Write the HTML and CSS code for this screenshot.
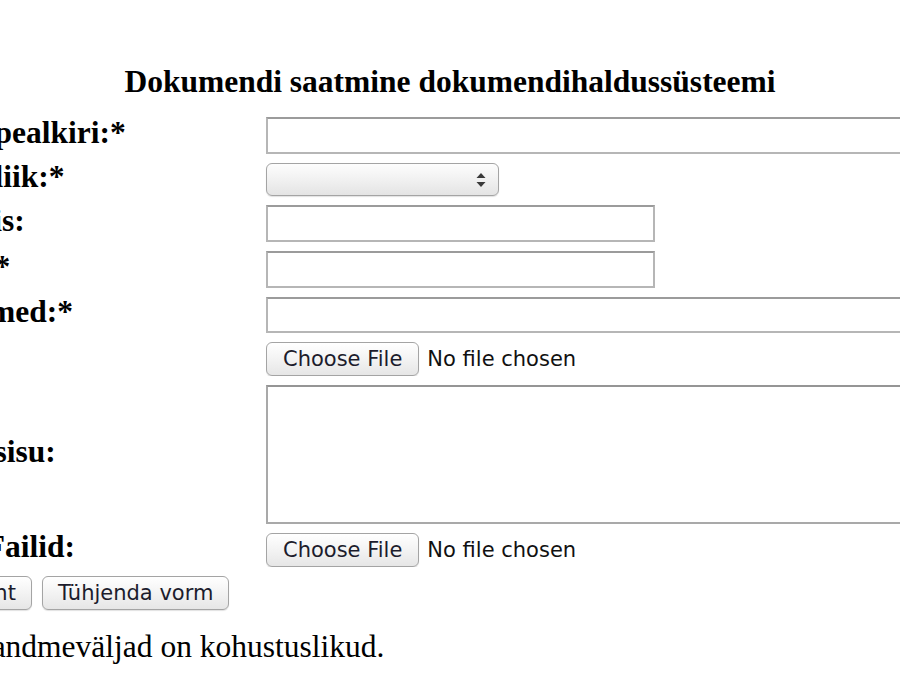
FILE: index.html
```html
<!DOCTYPE html>
<html lang="et">
<head>
  <meta charset="UTF-8" />
  <meta name="viewport" content="width=device-width, initial-scale=1.0" />
  <title>Dokumendi saatmine</title>
  <link rel="stylesheet" href="styles.css">
</head>
<body>
  <div class="title">Dokumendi saatmine dokumendihaldussüsteemi</div>
  <form class="doc-form" onsubmit="return false;">
    <div class="fields">
      <label class="name" for="pealkiri">Dokumendi pealkiri:*</label>
      <input class="text wide" type="text" id="pealkiri" />

      <label class="name" for="liik">Dokumendi liik:*</label>
      <div class="select-wrap">
        <select id="liik">
          <option></option>
        </select>
        <svg class="arrows" width="10" height="14" viewBox="0 0 10 14">
          <path d="M5 0 L9.5 5 H0.5 Z" fill="#3a3a3a" />
          <path d="M5 14 L9.5 9 H0.5 Z" fill="#3a3a3a" />
        </svg>
      </div>

      <label class="name" for="tahis">Toimiku tähis:</label>
      <input class="text short" type="text" id="tahis" />

      <label class="name" for="saatja">Saatja nimi:*</label>
      <input class="text short" type="text" id="saatja" />

      <label class="name" for="nimed">Osalejate nimed:*</label>
      <input class="text wide row-5" type="text" id="nimed" />

      <label class="name" for="fail">Põhifail:</label>
      <input class="file" type="file" id="fail" />

      <label class="name" for="sisu">Dokumendi sisu:</label>
      <textarea class="content" id="sisu"></textarea>

      <label class="name" for="failid">Kaasnevad Failid:</label>
      <input class="file" type="file" id="failid" />

      <div class="actions">
        <button type="submit">Saada dokument</button>
        <button type="reset">Tühjenda vorm</button>
      </div>
    </div>
    <p class="note">(*) märgitud andmeväljad on kohustuslikud.</p>
  </form>
</body>
</html>
```

FILE: styles.css
```css
body {
  margin: 0;
  font-family: "Liberation Serif", "Times New Roman", serif;
  font-size: 31.5px;
  color: #000;
  background: #fff;
  overflow: hidden;
}
.title {
  font-weight: bold;
  text-align: center;
  line-height: 36px;
  margin: 64px 0 17px;
  white-space: nowrap;
}
.doc-form {
  margin-left: -171px;
}
.fields {
  display: grid;
  grid-template-columns: 437px 1fr;
  row-gap: 9px;
  align-items: center;
}
.name {
  font-weight: bold;
  line-height: 24px;
  padding-bottom: 6px;
  white-space: nowrap;
}
.text {
  display: block;
  box-sizing: border-box;
  height: 37px;
  padding: 0 4px;
  border: 2px solid #b6b6b6;
  border-top-color: #9b9b9b;
  font: 21px "DejaVu Sans", sans-serif;
  background: #fff;
}
.text.row-5 {
  height: 36px;
}
.wide {
  width: 700px;
}
.short {
  width: 389px;
}
.select-wrap {
  position: relative;
  width: 233px;
  height: 33px;
}
.select-wrap select {
  appearance: none;
  -webkit-appearance: none;
  display: block;
  box-sizing: border-box;
  width: 100%;
  height: 100%;
  margin: 0;
  border: 1px solid #a4a4a4;
  border-radius: 6px;
  background: linear-gradient(#fdfdfd, #f1f1f1 50%, #e4e4e4);
  box-shadow: 0 1px 1px rgba(0, 0, 0, 0.12);
  font: 21px "DejaVu Sans", sans-serif;
}
.arrows {
  position: absolute;
  right: 13px;
  top: 10px;
  pointer-events: none;
}
.file {
  display: block;
  height: 34px;
  font: 21px "DejaVu Sans", sans-serif;
  color: #111;
}
.file::file-selector-button,
.actions button {
  box-sizing: border-box;
  height: 34px;
  padding: 0 15px;
  border: 1px solid #a4a4a4;
  border-radius: 6px;
  background: linear-gradient(#ffffff, #f3f3f3 50%, #e6e6e6);
  box-shadow: 0 1px 1px rgba(0, 0, 0, 0.12);
  font: 21px "DejaVu Sans", sans-serif;
  color: #1c1c2c;
}
.file::file-selector-button {
  padding: 0 16px;
  margin-right: 8px;
}
.content {
  display: block;
  box-sizing: border-box;
  width: 700px;
  height: 139px;
  border: 2px solid #a9a9a9;
  border-top-color: #959595;
  resize: none;
}
.actions {
  grid-column: 1 / -1;
  display: flex;
  gap: 10px;
  margin-left: -7px;
}
.actions button {
  margin: 0;
}
.note {
  margin: 19px 0 0 -3px;
  line-height: 36px;
  white-space: nowrap;
}
```
